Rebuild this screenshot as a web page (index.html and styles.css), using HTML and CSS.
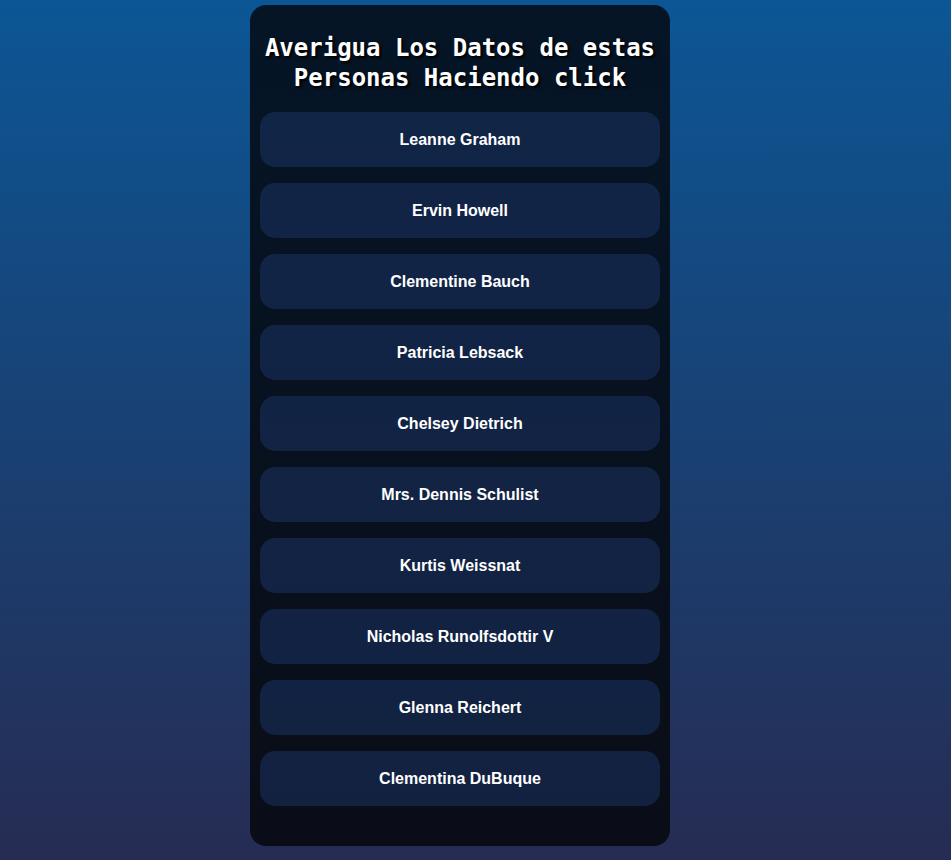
FILE: index.html
```html
<!DOCTYPE html>
<html lang="es">
<head>
<meta charset="utf-8">
<title>Personas</title>
<link rel="stylesheet" href="styles.css">
</head>
<body>
<main class="card">
  <h1 class="title">Averigua Los Datos de estas Personas Haciendo click</h1>
  <ul class="list">
    <li><button class="person">Leanne Graham</button></li>
    <li><button class="person">Ervin Howell</button></li>
    <li><button class="person">Clementine Bauch</button></li>
    <li><button class="person">Patricia Lebsack</button></li>
    <li><button class="person">Chelsey Dietrich</button></li>
    <li><button class="person">Mrs. Dennis Schulist</button></li>
    <li><button class="person">Kurtis Weissnat</button></li>
    <li><button class="person">Nicholas Runolfsdottir V</button></li>
    <li><button class="person">Glenna Reichert</button></li>
    <li><button class="person">Clementina DuBuque</button></li>
  </ul>
</main>
</body>
</html>
```
FILE: styles.css
```css
html, body {
  margin: 0;
  padding: 0;
}
body {
  min-height: 860px;
  background: linear-gradient(to bottom, #0c5695 0%, #262c53 100%);
  font-family: "Liberation Sans", Arial, sans-serif;
  padding: 5px 31px 0 0;
  box-sizing: border-box;
}
.card {
  width: 420px;
  margin: 0 auto;
  box-sizing: border-box;
  padding: 28px 10px 40px;
  border-radius: 16px;
  background: linear-gradient(to bottom, #051526 0%, #0a0d17 100%);
}
.title {
  margin: 0 0 19px;
  font-family: "DejaVu Sans Mono", monospace;
  font-weight: bold;
  font-size: 24px;
  line-height: 30px;
  color: #ffffff;
  text-align: center;
  text-shadow: 2px 2px 3px #000;
}
.list {
  list-style: none;
  margin: 0;
  padding: 0;
  display: flex;
  flex-direction: column;
  gap: 16px;
}
.person {
  display: block;
  width: 100%;
  height: 55px;
  border: none;
  border-radius: 15px;
  background: rgba(28, 54, 105, 0.5);
  color: #ffffff;
  font-family: "Liberation Sans", Arial, sans-serif;
  font-weight: bold;
  font-size: 16px;
  cursor: pointer;
}
```
